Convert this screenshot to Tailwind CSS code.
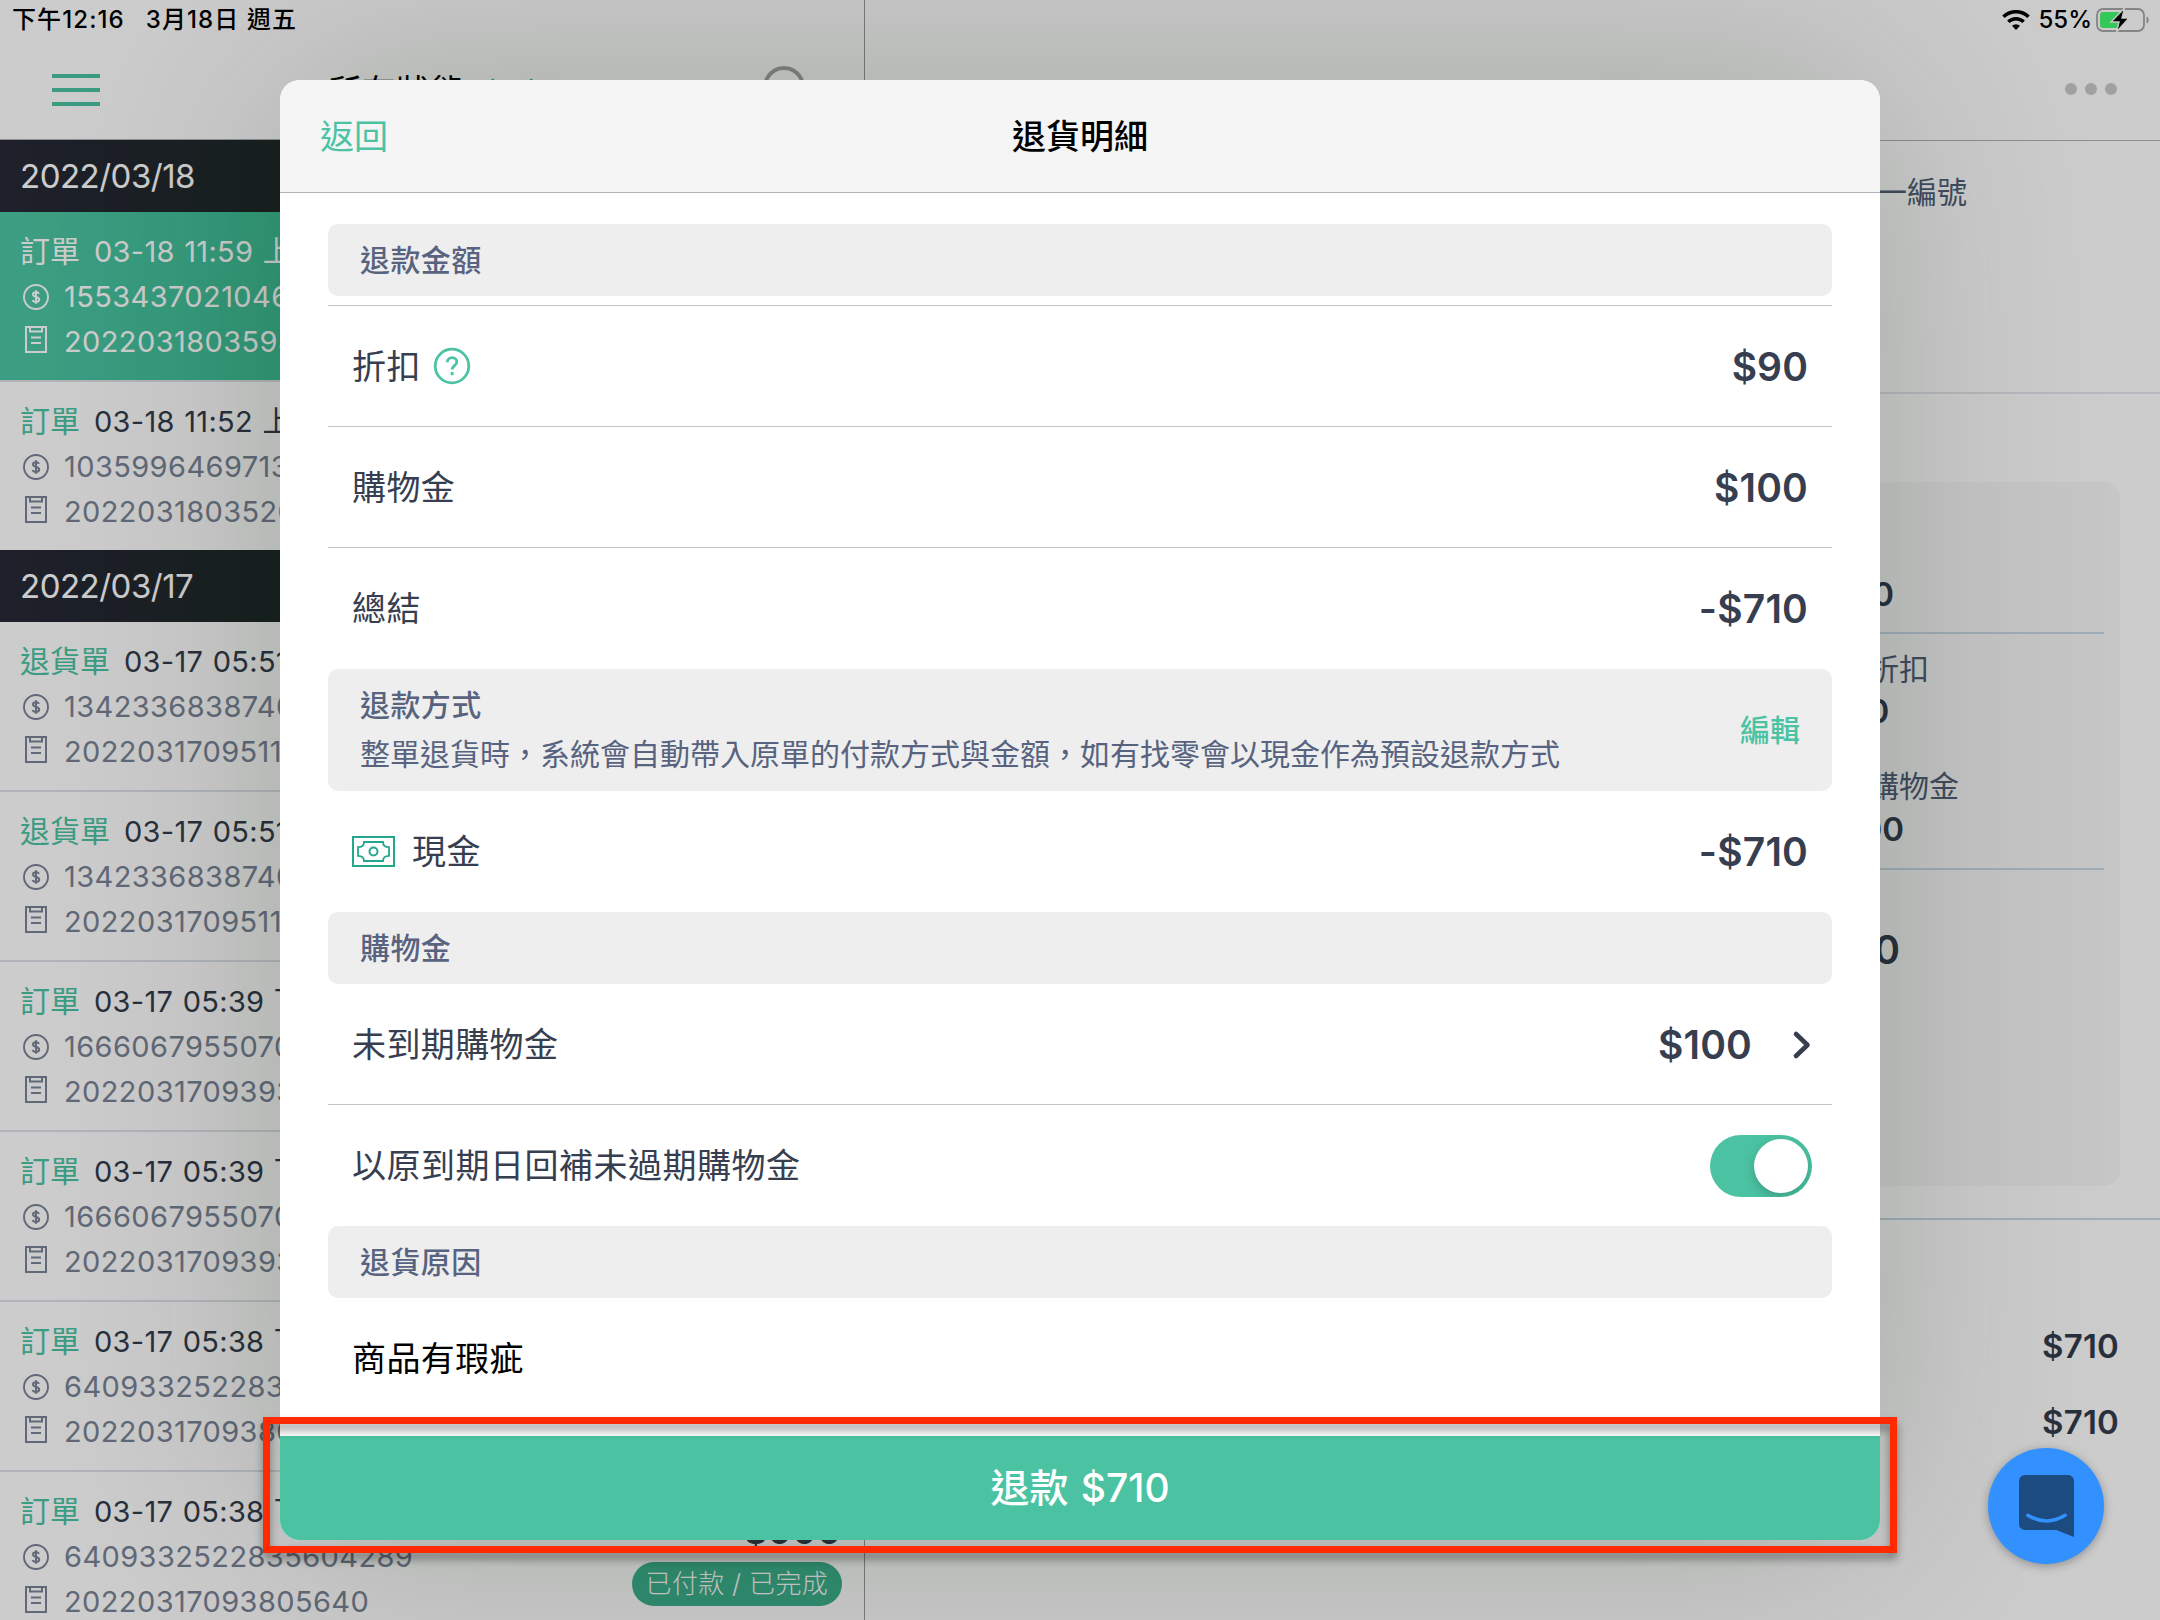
<!DOCTYPE html>
<html lang="zh-Hant">
<head>
    <meta charset="UTF-8">
    <meta name="viewport" content="width=device-width, initial-scale=1.0">
    <title>退貨明細</title>
    <script src="https://cdn.jsdelivr.net/npm/@tailwindcss/browser@4"></script>
</head>
<body class="font-['Inter','Noto_Sans_CJK_TC',sans-serif] bg-white">
    <!-- icon sprites -->
    <svg class="hidden">
        <symbol id="coin" viewBox="0 0 26 26">
            <circle cx="13" cy="13" r="12" fill="none" stroke="currentColor" stroke-width="1.9"/>
            <path d="M16 9.800c-.4-1-1.500-1.600-3-1.600-1.800 0-3 .9-3 2.300 0 3.300 6.200 1.600 6.200 5 0 1.500-1.300 2.400-3.200 2.400-1.700 0-2.900-.7-3.300-1.900M13 6.300v13.400" fill="none" stroke="currentColor" stroke-width="2"/>
        </symbol>
        <symbol id="receipt" viewBox="0 0 22 27">
            <path d="M1 1h20v25H1zM5 1v4.500h12V1M6 11.500h10M6 17h10" fill="none" stroke="currentColor" stroke-width="2"/>
        </symbol>
    </svg>

    <div class="relative w-[2160px] h-[1620px] overflow-hidden">
        <div class="flex h-full">
            <!-- order list -->
            <aside class="w-[865px] shrink-0 border-r border-[#9a9c9b] text-[#343d4d]">
                <header class="flex h-[140px] pt-[40px] items-center justify-between pl-[52px] pr-[59px] border-b border-[#b2b2b2]">
                    <div class="flex flex-col gap-[10px] text-[#4bc3a3]">
                        <div class="w-12 h-1 bg-current"></div>
                        <div class="w-12 h-1 bg-current"></div>
                        <div class="w-12 h-1 bg-current"></div>
                    </div>
                    <div class="flex items-center gap-[23px] pt-[4px] text-black text-[34px]">
                        <span class="tracking-[0.3px]">所有狀態</span>
                        <svg class="w-[48px] h-[32px] text-[#3fb795]" viewBox="0 0 48 32"><path d="M3 4l21 22L45 4" fill="none" stroke="currentColor" stroke-width="5"/></svg>
                    </div>
                    <svg class="w-[42px] h-[48px] text-[#a2a6a3]" viewBox="0 0 42 48"><circle cx="21" cy="21" r="19" fill="none" stroke="currentColor" stroke-width="4"/><path d="M33 34l9 12" stroke="currentColor" stroke-width="4"/></svg>
                </header>
                <div id="orders"></div>
            </aside>

            <!-- order detail -->
            <section class="flex-1 text-[#343d4d]">
                <header class="h-[141px] pt-[38px] flex items-center justify-end gap-2 pr-[43px] border-b border-[#b2b2b2]">
                    <i class="size-3 rounded-full bg-[#cacaca]"></i>
                    <i class="size-3 rounded-full bg-[#cacaca]"></i>
                    <i class="size-3 rounded-full bg-[#cacaca]"></i>
                </header>
                <div class="h-[253px] pt-[28px] pr-[193px] text-right text-[30px] leading-[46px] text-[#515e76] border-b-2 border-[#e3e6ec]">統一編號</div>
                <div class="mt-[88px] ml-[40px] mr-[40px] h-[704px] rounded-[16px] bg-[#f8f8f8] pr-4 pt-[88px]">
                    <div class="h-[64px] pr-[210px] border-b-2 border-[#c8d8e4] text-right text-[33px] font-semibold leading-[48px]">$900</div>
                    <div class="h-[236px] flex justify-end border-b-2 border-[#c8d8e4]">
                        <div class="w-[279px] pt-[14px] text-[30px]">
                            <div class="pl-[44px] leading-[42px] text-[#515e76]">折扣</div>
                            <div class="leading-[43px] text-[33px] font-semibold">$90</div>
                            <div class="pl-[44px] leading-[42px] text-[#515e76] mt-[32px]">購物金</div>
                            <div class="leading-[45px] text-[33px] font-semibold">$100</div>
                        </div>
                    </div>
                    <div class="pt-[56px] pr-[204px] text-right text-[39px] font-semibold leading-[48px]">$710</div>
                </div>
                <div class="mt-[32px] border-t-2 border-[#c8d8e4] pt-[88px] pr-[41px] text-right text-[33px] font-semibold leading-[76px] tracking-[0.2px]">
                    <div>$710</div>
                    <div>$710</div>
                </div>
            </section>
        </div>

        <div class="absolute inset-0 bg-black/20"></div>

        <!-- status bar -->
        <div class="absolute inset-x-0 top-0 h-10 flex items-center justify-between pl-[12px] pr-[10px] text-[24px] font-medium text-black">
            <div class="flex gap-[21px] tracking-[1.1px]">
                <span>下午12:16</span>
                <span>3月18日 週五</span>
            </div>
            <div class="flex items-center">
                <svg class="w-[28px] h-[20px]" viewBox="0 0 28 20">
                    <path d="M1.500 6.800a18 18 0 0 1 25 0" fill="none" stroke="#000" stroke-width="3.600"/>
                    <path d="M6.300 11.800a11.200 11.200 0 0 1 15.400 0" fill="none" stroke="#000" stroke-width="3.400"/>
                    <path d="M14 20l-4-4.200a5.800 5.800 0 0 1 8 0z"/>
                </svg>
                <span class="ml-[8px]">55%</span>
                <svg class="w-[54px] h-[26px] ml-[4px]" viewBox="0 0 54 26">
                    <rect x="1" y="2" width="47" height="22" rx="6" fill="none" stroke="#858585" stroke-width="1.800"/>
                    <path d="M50.500 9.500c3 1 3 6 0 7z" fill="#858585"/>
                    <path d="M7 5h18v16H7a3 3 0 0 1-3-3V8a3 3 0 0 1 3-3z" fill="#35c759"/>
                    <path d="M28.500 1L15 15h8l-2.500 10L33 11h-7z" fill="#000" stroke="#c9c9c9" stroke-width="1.400"/>
                </svg>
            </div>
        </div>

        <!-- refund dialog -->
        <div class="absolute left-[280px] top-[80px] w-[1600px] h-[1460px] rounded-[20px] bg-white shadow-[0_0_230px_rgba(0,30,10,0.2)]">
            <div class="flex flex-col h-full rounded-[20px] overflow-hidden text-[#363e50]">
                <header class="grid grid-cols-3 items-center h-[113px] shrink-0 px-[40px] bg-[#f5f5f5] border-b border-[#b3b3b3] text-[34px]">
                    <span class="text-[#4bc3a3]">返回</span>
                    <span class="text-center text-black font-medium">退貨明細</span>
                </header>
                <div class="flex-1 px-[48px] pt-[31px] text-[34px] tracking-[0.4px]">
                    <div class="h-[72px] rounded-[10px] bg-[#eee] px-[32px] flex items-center text-[30px] font-medium text-[#58637f]">退款金額</div>
                    <div class="mt-[9px] h-[121px] border-t border-[#c5c5c5] px-[24px] flex items-center justify-between">
                        <div class="flex items-center gap-[12px]">
                            <span>折扣</span>
                            <svg class="size-[38px]" viewBox="0 0 38 38" fill="none" stroke="#4bc3a3" stroke-width="2.800">
                                <circle cx="19" cy="19" r="16.800"/>
                                <path d="M14.300 15.300c0-2.800 2-4.600 4.800-4.600 2.700 0 4.700 1.700 4.700 4.200 0 3.600-4.700 3.900-4.700 7.600"/>
                                <path d="M19.100 25v3.200"/>
                            </svg>
                        </div>
                        <span class="pt-[2px] text-[39px] font-semibold tracking-[0.1px]">$90</span>
                    </div>
                    <div class="h-[121px] border-t border-[#c5c5c5] px-[24px] flex items-center justify-between">
                        <span>購物金</span>
                        <span class="pt-[2px] text-[39px] font-semibold tracking-[0.2px]">$100</span>
                    </div>
                    <div class="h-[122px] border-t border-[#c5c5c5] px-[24px] flex items-center justify-between">
                        <span>總結</span>
                        <span class="pt-[2px] text-[39px] font-semibold tracking-[0.2px]">-$710</span>
                    </div>
                    <div class="h-[122px] rounded-[10px] bg-[#eee] px-[32px] flex items-center justify-between text-[30px] text-[#58637f]">
                        <div class="leading-[49px]">
                            <div class="font-medium">退款方式</div>
                            <div class="tracking-normal">整單退貨時，系統會自動帶入原單的付款方式與金額，如有找零會以現金作為預設退款方式</div>
                        </div>
                        <span class="font-medium tracking-normal text-[#4bc3a3]">編輯</span>
                    </div>
                    <div class="h-[121px] px-[24px] flex items-center justify-between">
                        <div class="flex items-center gap-[17px]">
                            <svg class="w-[43px] h-[31px]" viewBox="0 0 43 31" fill="none" stroke="#22a78d" stroke-width="2">
                                <path d="M1 1h41v29H1z"/>
                                <path d="M12 6h19c0 3 2 5.200 6 5.200v8.600c-4 0-6 2.200-6 5.200H12c0-3-2-5.200-6-5.200v-8.600c4 0 6-2.200 6-5.200z" stroke-width="1.800"/>
                                <circle cx="21.500" cy="15.500" r="4"/>
                            </svg>
                            <span>現金</span>
                        </div>
                        <span class="pt-[2px] text-[39px] font-semibold tracking-[0.2px]">-$710</span>
                    </div>
                    <div class="h-[72px] rounded-[10px] bg-[#eee] px-[32px] flex items-center text-[30px] font-medium text-[#58637f]">購物金</div>
                    <div class="h-[120px] px-[24px] flex items-center justify-between">
                        <span>未到期購物金</span>
                        <div class="flex items-center gap-[40px] -mr-[4px] pt-[2px]">
                            <span class="text-[39px] font-semibold tracking-[0.2px]">$100</span>
                            <svg class="w-[20px] h-[30px]" viewBox="0 0 20 30"><path d="M4 4l11.500 11L4 26" fill="none" stroke="#363e50" stroke-width="4.600" stroke-linecap="round" stroke-linejoin="round"/></svg>
                        </div>
                    </div>
                    <div class="h-[122px] border-t border-[#c5c5c5] pl-[24px] pr-[20px] flex items-center justify-between">
                        <span class="tracking-[0.5px]">以原到期日回補未過期購物金</span>
                        <div class="w-[102px] h-[62px] rounded-full bg-[#4bc3a3] p-1 flex justify-end overflow-hidden">
                            <div class="size-[54px] rounded-full bg-white shadow-[0_4px_12px_rgba(0,0,0,0.2)]"></div>
                        </div>
                    </div>
                    <div class="h-[72px] rounded-[10px] bg-[#eee] px-[32px] flex items-center text-[30px] font-medium text-[#58637f]">退貨原因</div>
                    <div class="h-[120px] px-[24px] flex items-center text-black">商品有瑕疵</div>
                </div>
                <button class="h-[104px] shrink-0 bg-[#4bc3a3] text-white text-[39px] font-medium [word-spacing:2px]">退款 $710</button>
            </div>
        </div>

        <!-- chat launcher -->
        <div class="absolute left-[1988px] top-[1448px] size-[116px] rounded-full bg-[#3391ff] shadow-[0_2px_10px_rgba(0,0,0,0.3)] flex items-center justify-center">
            <svg class="w-[55px] h-[63px]" viewBox="0 0 56 64">
                <path d="M6 0h44a6 6 0 0 1 6 6v57l-18-7H6a6 6 0 0 1-6-6V6a6 6 0 0 1 6-6z" fill="#1c4b80"/>
                <path d="M9 41q19 11.500 38 0" fill="none" stroke="#3391ff" stroke-width="3.600" stroke-linecap="round"/>
            </svg>
        </div>

        <!-- highlight frame -->
        <div class="absolute left-[263px] top-[1417px] w-[1634px] h-[136px] border-[7px] border-[#ff2a00] drop-shadow-[0_6px_4px_rgba(0,0,0,0.4)]"></div>
    </div>

    <script>
        const days = [
            { date: '2022/03/18', orders: [
                { type: '訂單', time: '03-18 11:59 上午', pay: '1553437021046', no: '20220318035940', active: true },
                { type: '訂單', time: '03-18 11:52 上午', pay: '1035996469713', no: '20220318035200' }
            ] },
            { date: '2022/03/17', orders: [
                { type: '退貨單', time: '03-17 05:51', pay: '13423368387404', no: '2022031709511' },
                { type: '退貨單', time: '03-17 05:51', pay: '13423368387404', no: '2022031709511' },
                { type: '訂單', time: '03-17 05:39 下午', pay: '1666067955070', no: '20220317093930' },
                { type: '訂單', time: '03-17 05:39 下午', pay: '1666067955070', no: '20220317093930' },
                { type: '訂單', time: '03-17 05:38 下午', pay: '6409332522835', no: '20220317093805' },
                { type: '訂單', time: '03-17 05:38 下午', pay: '6409332522835604289', no: '20220317093805640', amount: '$900', status: '已付款 / 已完成' }
            ] }
        ];

        document.getElementById('orders').innerHTML = days.map(day => `
            <div class="h-[72px] pl-[20px] bg-linear-to-r from-[#272936] to-[#1e2828] to-[280px] text-white text-[33px] leading-[73px] tracking-[-0.5px]">${day.date}</div>
            ${day.orders.map((o, i) => `
                <div class="relative pl-[20px] pt-[17px] text-[29px] leading-[45px] ${o.active ? 'bg-linear-to-r from-[#4dc6a4] to-[#3fc097] to-[280px] text-white' : ''} ${i < day.orders.length - 1 ? 'h-[170px] border-b-2 border-[#dde2e8]' : 'h-[168px]'}">
                    <div class="flex gap-[14px]">
                        <span class="text-[30px] ${o.active ? '' : 'text-[#4bc3a3]'}">${o.type}</span>
                        <span class="tracking-[0.3px] [word-spacing:1px]">${o.time}</span>
                    </div>
                    <div class="tracking-[0.4px] ${o.active ? '' : 'text-[#7a8496]'}">
                        <div class="flex items-center"><svg class="ml-[3px] mr-[15px] size-[26px]"><use href="#coin"/></svg>${o.pay}</div>
                        <div class="flex items-center"><svg class="ml-[5px] mr-[17px] mb-[4px] w-[22px] h-[27px]"><use href="#receipt"/></svg>${o.no}</div>
                    </div>
                    ${o.amount ? `
                    <div class="absolute right-[22px] top-[36px] flex flex-col items-end">
                        <span class="pb-[8px] text-[36px] font-semibold leading-[46px] tracking-[1px]">${o.amount}</span>
                        <span class="h-[44px] px-[14px] rounded-full bg-[#3eb28e] text-white text-[26px] leading-[43px] font-light tracking-[0.3px]">${o.status}</span>
                    </div>` : ''}
                </div>`).join('')}`).join('');
    </script>
</body>
</html>
